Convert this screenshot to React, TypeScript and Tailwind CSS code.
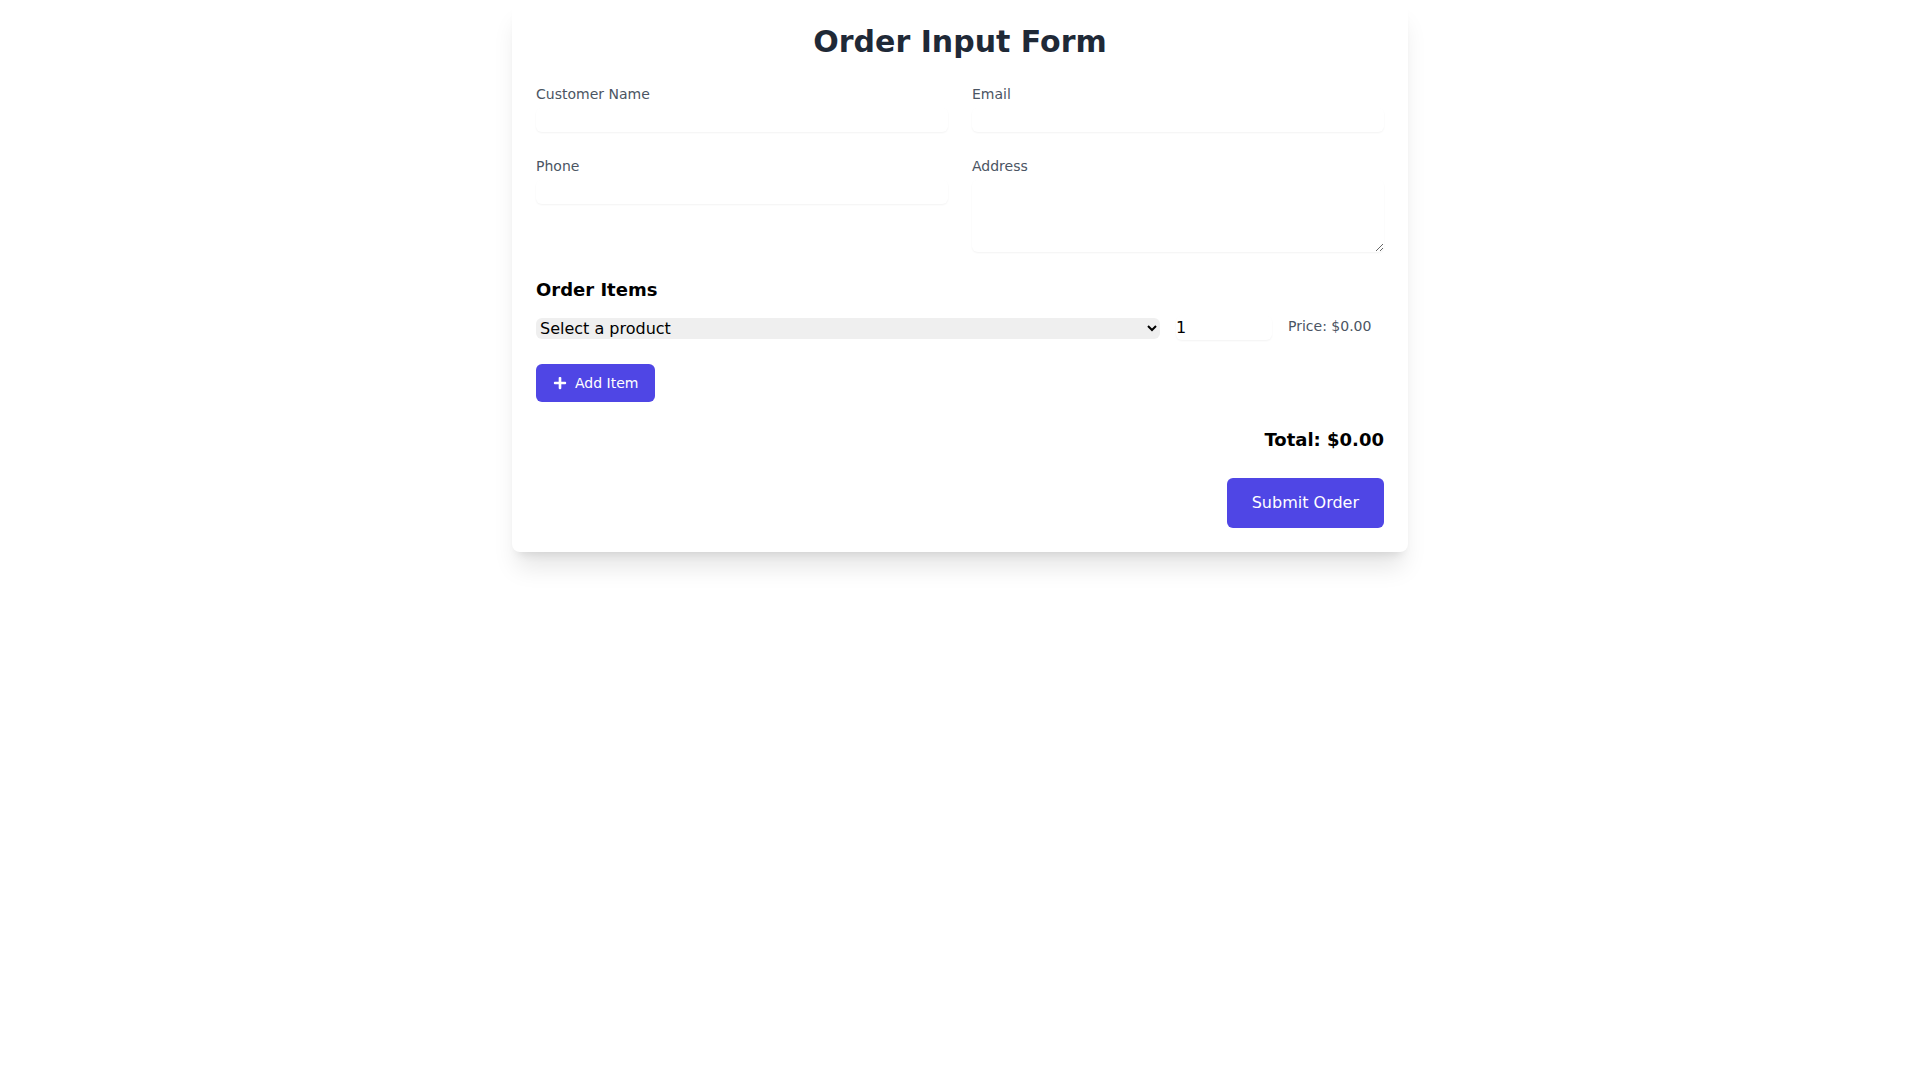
import React from "react";
import { FaPlus } from "react-icons/fa";

export default function App() {
  return (
    <div className="min-h-screen bg-white font-['DejaVu_Sans',sans-serif]">
      <div className="max-w-4xl mx-auto bg-white rounded-lg shadow-xl p-6">
        <h1 className="text-3xl font-bold text-center text-[#1f2937] mb-6">Order Input Form</h1>
        <div className="grid grid-cols-2 gap-6">
          <div>
            <label className="block text-sm text-[#4b5563]">Customer Name</label>
            <input type="text" className="mt-1 block w-full rounded-md shadow-xs outline-none" />
          </div>
          <div>
            <label className="block text-sm text-[#4b5563]">Email</label>
            <input type="email" className="mt-1 block w-full rounded-md shadow-xs outline-none" />
          </div>
          <div>
            <label className="block text-sm text-[#4b5563]">Phone</label>
            <input type="tel" className="mt-1 block w-full rounded-md shadow-xs outline-none" />
          </div>
          <div>
            <label className="block text-sm text-[#4b5563]">Address</label>
            <textarea rows={3} className="mt-1 block w-full rounded-md shadow-xs outline-none" />
          </div>
        </div>
        <h2 className="mt-6 mb-3 text-lg font-bold text-black">Order Items</h2>
        <div className="flex items-center gap-4">
          <select className="flex-1 rounded-md bg-[#efefef] text-black">
            <option>Select a product</option>
          </select>
          <input type="number" defaultValue={1} className="w-24 rounded-md shadow-xs outline-none text-black" />
          <span className="w-24 self-start text-sm text-[#4b5563]">Price: $0.00</span>
        </div>
        <button className="mt-6 inline-flex items-center px-4 py-2 border border-transparent rounded-md bg-[#4f46e5] text-white text-sm">
          <FaPlus className="mr-2" />
          Add Item
        </button>
        <div className="mt-6 text-right text-lg font-bold text-black">Total: $0.00</div>
        <div className="mt-6 flex justify-end">
          <button className="px-6 py-3 border border-transparent rounded-md bg-[#4f46e5] text-white text-base">
            Submit Order
          </button>
        </div>
      </div>
    </div>
  );
}
